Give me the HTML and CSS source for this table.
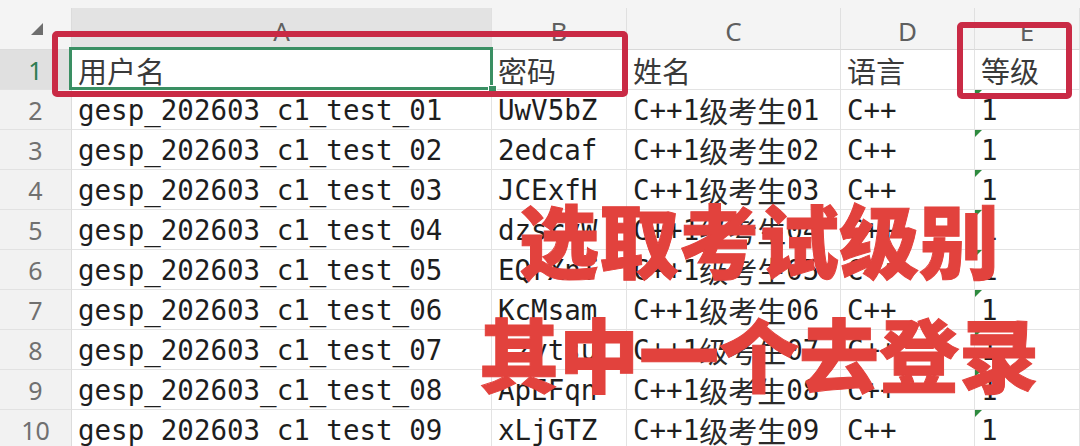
FILE: index.html
```html
<!DOCTYPE html>
<html lang="zh-CN">
<head>
<meta charset="utf-8">
<title>考生账号表</title>
<link rel="stylesheet" href="styles.css">
</head>
<body>
<div class="page">
  <div class="topstrip"></div>
  <div class="sheet">
    <div class="corner"><span class="selall"></span></div>
    <div class="colhead sel">A</div>
    <div class="colhead">B</div>
    <div class="colhead">C</div>
    <div class="colhead">D</div>
    <div class="colhead">E</div>

    <div class="rowhead sel">1</div>
    <div class="cell hdr">用户名</div>
    <div class="cell hdr">密码</div>
    <div class="cell hdr">姓名</div>
    <div class="cell hdr">语言</div>
    <div class="cell hdr">等级</div>

    <div class="rowhead">2</div>
    <div class="cell">gesp_202603_c1_test_01</div>
    <div class="cell">UwV5bZ</div>
    <div class="cell">C++1<span class="cn">级考生</span>01</div>
    <div class="cell">C++</div>
    <div class="cell num"><i class="tri"></i>1</div>

    <div class="rowhead">3</div>
    <div class="cell">gesp_202603_c1_test_02</div>
    <div class="cell">2edcaf</div>
    <div class="cell">C++1<span class="cn">级考生</span>02</div>
    <div class="cell">C++</div>
    <div class="cell num"><i class="tri"></i>1</div>

    <div class="rowhead">4</div>
    <div class="cell">gesp_202603_c1_test_03</div>
    <div class="cell">JCExfH</div>
    <div class="cell">C++1<span class="cn">级考生</span>03</div>
    <div class="cell">C++</div>
    <div class="cell num"><i class="tri"></i>1</div>

    <div class="rowhead">5</div>
    <div class="cell">gesp_202603_c1_test_04</div>
    <div class="cell">dzsrvW</div>
    <div class="cell">C++1<span class="cn">级考生</span>04</div>
    <div class="cell">C++</div>
    <div class="cell num"><i class="tri"></i>1</div>

    <div class="rowhead">6</div>
    <div class="cell">gesp_202603_c1_test_05</div>
    <div class="cell">EQrXnT</div>
    <div class="cell">C++1<span class="cn">级考生</span>05</div>
    <div class="cell">C++</div>
    <div class="cell num"><i class="tri"></i>1</div>

    <div class="rowhead">7</div>
    <div class="cell">gesp_202603_c1_test_06</div>
    <div class="cell">KcMsam</div>
    <div class="cell">C++1<span class="cn">级考生</span>06</div>
    <div class="cell">C++</div>
    <div class="cell num"><i class="tri"></i>1</div>

    <div class="rowhead">8</div>
    <div class="cell">gesp_202603_c1_test_07</div>
    <div class="cell">Lzytsu</div>
    <div class="cell">C++1<span class="cn">级考生</span>07</div>
    <div class="cell">C++</div>
    <div class="cell num"><i class="tri"></i>1</div>

    <div class="rowhead">9</div>
    <div class="cell">gesp_202603_c1_test_08</div>
    <div class="cell">ApEFqn</div>
    <div class="cell">C++1<span class="cn">级考生</span>08</div>
    <div class="cell">C++</div>
    <div class="cell num"><i class="tri"></i>1</div>

    <div class="rowhead">10</div>
    <div class="cell">gesp_202603_c1_test_09</div>
    <div class="cell">xLjGTZ</div>
    <div class="cell">C++1<span class="cn">级考生</span>09</div>
    <div class="cell">C++</div>
    <div class="cell num"><i class="tri"></i>1</div>
  </div>

  <div class="selection"><span class="handle"></span></div>
  <div class="redbox box-a"></div>
  <div class="redbox box-e"></div>

  <div class="caption">
    <div class="line">选取考试级别</div>
    <div class="line">其中一个去登录</div>
  </div>
</div>
</body>
</html>
```

FILE: styles.css
```css
html, body {
  margin: 0;
  padding: 0;
  background: #ffffff;
}

.page {
  position: relative;
  width: 1080px;
  height: 446px;
  overflow: hidden;
  background: #ffffff;
}

.topstrip {
  height: 8px;
  background: #f4f4f4;
}

.sheet {
  display: grid;
  grid-template-columns: 72px 420px 135px 214px 134px 1fr;
  grid-template-rows: 42px;
  grid-auto-rows: 40px;
}

.corner {
  background: #f4f4f4;
  border-right: 1px solid #dcdcdc;
  border-bottom: 1px solid #dcdcdc;
  position: relative;
}

.selall {
  position: absolute;
  left: 31px;
  top: 15px;
  width: 0;
  height: 0;
  border-left: 12px solid transparent;
  border-bottom: 12px solid #6e6e6e;
}

.colhead {
  background: #f4f4f4;
  border-right: 1px solid #e0e0e0;
  border-bottom: 1px solid #d8d8d8;
  display: flex;
  align-items: center;
  justify-content: center;
  font-family: "Noto Sans", "Liberation Sans", sans-serif;
  font-size: 26px;
  color: #5f5f5f;
  padding-top: 4px;
}

.colhead.sel {
  background: #e3e3e3;
}

.rowhead {
  background: #f2f2f2;
  border-right: 1px solid #dcdcdc;
  border-bottom: 1px solid #e2e2e2;
  display: flex;
  align-items: center;
  justify-content: center;
  font-family: "Noto Sans", "Liberation Sans", sans-serif;
  font-size: 25px;
  color: #707070;
}

.rowhead.sel {
  background: #e0e0e0;
  color: #2f7d52;
}

.cell {
  border-right: 1px solid #e3e3e3;
  border-bottom: 1px solid #e3e3e3;
  padding-left: 6px;
  display: flex;
  align-items: center;
  white-space: nowrap;
  overflow: hidden;
  font-family: "DejaVu Sans Mono", "Noto Sans CJK SC", monospace;
  font-size: 27.5px;
  color: #1e1e1e;
  position: relative;
}

.cell.hdr {
  font-family: "Noto Sans CJK SC", "DejaVu Sans", sans-serif;
  font-size: 29px;
  color: #3a3a3a;
}

.cn {
  font-family: "Noto Sans CJK SC", sans-serif;
  font-size: 29px;
  color: #2a2a2a;
}

.cell.num {
  padding-left: 6px;
}

.tri {
  position: absolute;
  left: 0;
  top: 0;
  width: 0;
  height: 0;
  border-top: 7px solid #2e8b3f;
  border-right: 7px solid transparent;
}

.selection {
  position: absolute;
  left: 69px;
  top: 47px;
  width: 418px;
  height: 37px;
  border: 3px solid #3a8f63;
}

.handle {
  position: absolute;
  right: -7px;
  bottom: -7px;
  width: 7px;
  height: 7px;
  background: #3a8f63;
  border: 1px solid #ffffff;
}

.redbox {
  position: absolute;
  border: 6px solid #c92a45;
  border-radius: 5px;
  box-sizing: border-box;
}

.box-a {
  left: 52px;
  top: 31px;
  width: 576px;
  height: 66px;
}

.box-e {
  left: 957px;
  top: 22px;
  width: 115px;
  height: 77px;
}

.caption {
  position: absolute;
  left: 459px;
  top: 180px;
  width: 600px;
  text-align: center;
  font-family: "Noto Sans CJK SC", sans-serif;
  font-weight: 900;
  font-size: 80px;
  line-height: 114px;
  color: #e2423d;
  -webkit-text-stroke: 1px #e2423d;
}

.line {
  white-space: nowrap;
}
```
